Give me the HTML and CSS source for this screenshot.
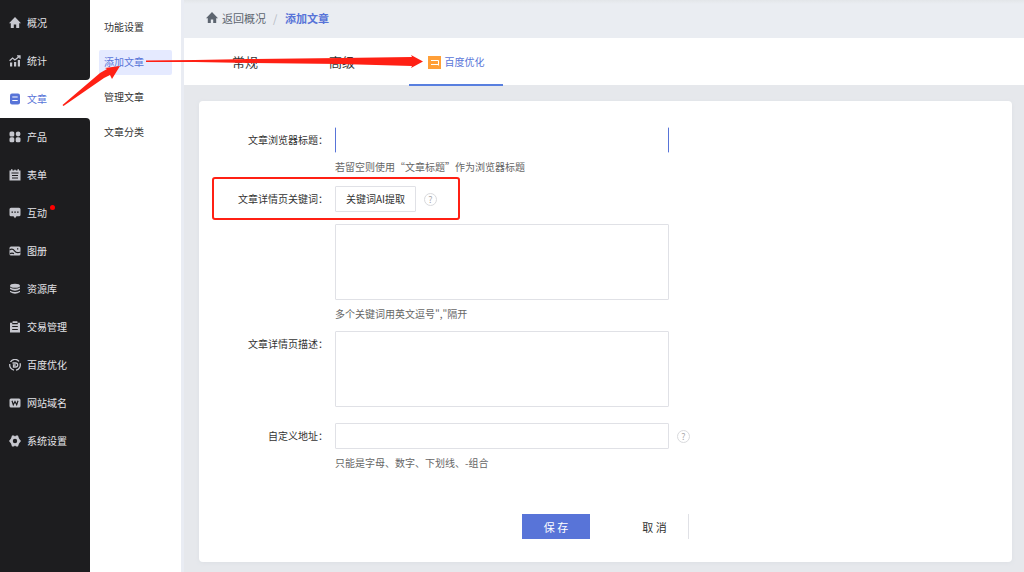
FILE: index.html
```
<!DOCTYPE html>
<html lang="zh-CN">
<head>
<meta charset="utf-8">
<title>添加文章</title>
<link rel="stylesheet" href="styles.css">
</head>
<body>
<div class="app">
  <nav class="sidebar">
    <a class="side-item" href="#"><svg class="icon" viewBox="0 0 12 12"><path d="M6 0 12 6.200H10.200V11H7.200V7.600H4.800V11H1.800V6.200H0Z"/></svg>概况</a>
    <a class="side-item above-active" href="#"><svg class="icon" viewBox="0 0 12 12"><path d="M1 7.500h2.200v4H1zM5 7h2.200v4.500H5zM8.800 5H11v6.500H8.800z"/><path class="line" d="M.6 5.800 3.600 3l2.300 2L10.600 1.200M8 .8h3v3"/></svg>统计</a>
    <a class="side-item active" href="#"><svg class="icon" viewBox="0 0 12 12"><rect x="1" y=".5" width="10" height="11" rx="2"/><path class="cut" d="M3.300 4h5.400M3.300 7.500h5.400"/></svg>文章</a>
    <a class="side-item below-active" href="#"><svg class="icon" viewBox="0 0 12 12"><rect x=".5" y=".5" width="4.800" height="5" rx="1.500"/><rect x="6.700" y=".5" width="4.800" height="5" rx="2.400"/><rect x=".5" y="6.300" width="4.800" height="5" rx="1.500"/><rect x="6.700" y="6.300" width="4.800" height="5" rx="1.500"/></svg>产品</a>
    <a class="side-item" href="#"><svg class="icon" viewBox="0 0 12 12"><path d="M.5 1.500h1.500V.3h1.500v1.200h1.500L6 .3l1 1.200h1.500V.3H10v1.200h1.500v10H.5Z"/><path class="cut" d="M2.500 4h7M3 6.500h6M3 9h6"/></svg>表单</a>
    <a class="side-item" href="#"><svg class="icon" viewBox="0 0 12 12"><path d="M2 .8h8q1.500 0 1.500 1.500v5.500q0 1.500-1.500 1.500H7.500L6 11.200 4.500 9.300H2Q.5 9.300.5 7.800V2.300Q.5.8 2 .8Z"/><path class="cut" d="M2.500 5.200H4M5.300 5.200h1.500M8.100 5.200h1.500"/></svg><span class="dotted">互动<i class="dot"></i></span></a>
    <a class="side-item" href="#"><svg class="icon" viewBox="0 0 12 12"><rect x=".5" y="1.500" width="11" height="9" rx="1.500"/><path class="cut" d="M.5 5q3-2 5 .8t6 1.200M8 3.800h1.300M1 8.600q2-1 4 0"/></svg>图册</a>
    <a class="side-item" href="#"><svg class="icon" viewBox="0 0 12 12"><ellipse cx="6" cy="2.800" rx="5" ry="2"/><path d="M1 4.600q5 2.400 10 0v1.500q-5 3.200-10 0ZM1 7.700q5 2.400 10 0v1.200q-5 3.600-10 0Z"/></svg>资源库</a>
    <a class="side-item" href="#"><svg class="icon" viewBox="0 0 12 12"><path d="M1 1.800h2.600V.3h4.800v1.500H11v9.700H1Z"/><path class="cut" d="M3.200 2.600h5.600M3.200 5.500h5.600M3.200 8.500h5.600"/></svg>交易管理</a>
    <a class="side-item" href="#"><svg class="icon" viewBox="0 0 12 12"><path class="line" d="M1.500 3A5.200 5.200 0 0 1 10 2.300M11 4.200A5.200 5.200 0 0 1 7 11.100M5 11.100A5.200 5.200 0 0 1 .8 5M3.500 4h3.200a2 2 0 0 1 0 4H4.500V6h2.300"/></svg>百度优化</a>
    <a class="side-item" href="#"><svg class="icon" viewBox="0 0 12 12"><rect x=".5" y="1.500" width="11" height="9" rx="1.500"/><path class="cut" d="m3 3.800 1.300 4L6 4.500l1.700 3.300L9 3.800"/></svg>网站域名</a>
    <a class="side-item" href="#"><svg class="icon" viewBox="0 0 12 12"><path fill-rule="evenodd" d="M3 .5h2L6 1.400 7 .5h2L10 3.600 12 6 10 8.400 9 11.500H7L6 10.600 5 11.500H3L2 8.400 0 6 2 3.600ZM6 3.800a2.200 2.200 0 1 0 0 4.400 2.200 2.200 0 0 0 0-4.400Z"/></svg>系统设置</a>
  </nav>

  <nav class="submenu">
    <a class="sub-item" href="#">功能设置</a>
    <a class="sub-item current" href="#">添加文章</a>
    <a class="sub-item" href="#">管理文章</a>
    <a class="sub-item" href="#">文章分类</a>
  </nav>

  <div class="page">
    <header class="crumbs">
      <a class="back" href="#"><svg class="icon" viewBox="0 0 12 12"><path d="M6 0 12 6.200H10.200V11H7.200V7.600H4.800V11H1.800V6.200H0Z"/></svg>返回概况</a>
      <span class="slash">/</span>
      <strong class="here">添加文章</strong>
    </header>

    <div class="tabs">
      <button class="tab" type="button">常规</button>
      <button class="tab" type="button">高级</button>
      <button class="tab selected" type="button"><svg class="badge" viewBox="0 0 13 13"><rect width="13" height="13"/><path d="M3 4.500h7.500v5M3 8.500h7"/></svg>百度优化</button>
    </div>

    <main class="main">
      <form class="card">
        <div class="row">
          <label for="title">文章浏览器标题：</label>
          <div class="field">
            <input class="box focused" id="title" type="text">
            <p class="hint">若留空则使用“文章标题”作为浏览器标题</p>
          </div>
        </div>
        <div class="row keywords">
          <label for="keywords">文章详情页关键词：</label>
          <div class="field">
            <div class="line-up">
              <button class="extract" type="button">关键词AI提取</button>
              <button class="help" type="button">?</button>
            </div>
            <textarea class="box area" id="keywords"></textarea>
            <p class="hint">多个关键词用英文逗号","隔开</p>
          </div>
        </div>
        <div class="row">
          <label for="desc">文章详情页描述：</label>
          <div class="field"><textarea class="box area" id="desc"></textarea></div>
        </div>
        <div class="row address">
          <label for="address">自定义地址：</label>
          <div class="field">
            <div class="line-up">
              <input class="box" id="address" type="text">
              <button class="help" type="button">?</button>
            </div>
            <p class="hint">只能是字母、数字、下划线、-组合</p>
          </div>
        </div>
        <div class="actions">
          <button class="action save" type="submit">保 存</button>
          <button class="action cancel" type="button">取 消</button>
        </div>
      </form>
    </main>
  </div>
</div>

<svg class="marks" width="480" height="230" viewBox="0 0 480 230" aria-hidden="true">
  <path d="M62.500 105 100 73 107 69 105 68 120 66 112 79 110 75 104 78 63.500 106Z"/>
  <path d="M146 60.500 195 60 250 59 340 58 412 57 411 55 423 61.500 411 68 412 66 340 64 250 63 195 62 146 62Z"/>
  <rect x="213" y="178" width="246" height="41" rx="2"/>
</svg>
</body>
</html>
```
FILE: styles.css
```
* {
  box-sizing: border-box;
}

body {
  margin: 0;
  font: 10px/20px "Noto Sans CJK SC", "Liberation Sans", sans-serif;
  color: #333;
  background: #e6e8ec;
}

a {
  color: inherit;
  text-decoration: none;
}

button,
input,
textarea {
  font: inherit;
  color: inherit;
}

button {
  padding: 0;
  border: 0;
  background: none;
  cursor: pointer;
}

.app {
  display: flex;
  min-height: 100vh;
}

.icon {
  width: 12px;
  height: 12px;
  flex: none;
  fill: currentColor;
}

.icon .line {
  fill: none;
  stroke: currentColor;
  stroke-width: 1.3;
}

.icon .cut {
  fill: none;
  stroke: #1d1d1f;
  stroke-width: 1.2;
}

/* Primary navigation */
.sidebar {
  display: flex;
  flex-direction: column;
  flex: none;
  width: 90px;
  background: #fff;
}

.sidebar::before,
.sidebar::after {
  content: "";
  background: #1d1d1f;
}

.sidebar::before {
  height: 4px;
}

.sidebar::after {
  flex: 1;
}

.side-item {
  display: flex;
  align-items: center;
  gap: 6px;
  height: 38px;
  padding-left: 9px;
  color: #e4e4e8;
  background: #1d1d1f;
}

.side-item .icon {
  color: #c6c7ce;
}

.side-item.above-active {
  border-bottom-right-radius: 4px;
}

.side-item.below-active {
  border-top-right-radius: 4px;
}

.side-item.active,
.side-item.active .icon {
  color: #5874d8;
  background: #fff;
}

.side-item.active .cut {
  stroke: #fff;
}

.dotted {
  position: relative;
}

.dot {
  position: absolute;
  top: 2px;
  right: -8px;
  width: 5px;
  height: 5px;
  border-radius: 50%;
  background: #f00;
}

/* Secondary navigation */
.submenu {
  display: flex;
  flex-direction: column;
  gap: 10px;
  flex: none;
  width: 94px;
  padding: 15px 9px 0 9px;
  background: #fff;
  border-right: 3px solid #e9ecf3;
}

.sub-item {
  height: 25px;
  padding-left: 5px;
  line-height: 24px;
  border-radius: 2px;
}

.sub-item.current {
  color: #5874d8;
  background: #e5eaff;
}

/* Page header */
.page {
  display: flex;
  flex-direction: column;
  flex: 1;
  min-width: 0;
}

.crumbs {
  display: flex;
  align-items: center;
  gap: 7px;
  height: 38px;
  padding: 0 0 2px 22px;
  font-size: 11px;
  color: #5d6570;
  background: linear-gradient(#e3e6e9, #eaedf2 4px);
}

.back {
  display: flex;
  align-items: center;
  gap: 4px;
}

.slash {
  color: #b4bac2;
  width: 5px;
}

.here {
  color: #5874d8;
}

.tabs {
  display: flex;
  height: 47px;
  padding-left: 14px;
  background: #fff;
}

.tab {
  width: 94px;
  height: 48px;
  margin-right: 3px;
  font-size: 13px;
}

.tab.selected {
  display: flex;
  align-items: center;
  justify-content: center;
  gap: 4px;
  margin-left: 17px;
  font-size: 10px;
  color: #5874d8;
  border-bottom: 2px solid #587fdf;
  padding-top: 2px;
}

.badge {
  width: 13px;
  height: 13px;
  fill: #ff9f38;
}

.badge path {
  fill: none;
  stroke: #fff;
}

/* Form */
.main {
  flex: 1;
  padding: 16px 12px 10px 15px;
}

.card {
  min-height: 100%;
  padding-top: 26px;
  background: #fff;
  border-radius: 4px;
  box-shadow: 0 1px 4px #dcdfe4;
}

.row {
  display: grid;
  grid-template-columns: 129px 1fr;
  gap: 7px;
}

.row label {
  text-align: right;
  line-height: 26px;
}

.keywords {
  margin-top: 5px;
}

.address {
  margin-top: 16px;
}

.box {
  display: block;
  width: 334px;
  height: 26px;
  padding: 0 8px;
  border: 1px solid #e0e1e6;
  border-radius: 1px;
  outline: 0;
  background: #fff;
}

.box.focused {
  border-color: #fff #5874d8;
}

.box.area {
  height: 76px;
  resize: none;
}

.hint {
  margin: 0;
  line-height: 28px;
  color: #666;
}

.line-up {
  display: flex;
  align-items: center;
  gap: 8px;
}

.keywords .line-up {
  margin-bottom: 12px;
}

.keywords .hint {
  margin-bottom: 3px;
}

.extract {
  width: 81px;
  height: 26px;
  border: 1px solid #e0e1e6;
  border-radius: 1px;
}

.help {
  width: 13px;
  height: 13px;
  font-size: 9px;
  line-height: 11px;
  color: #aaa;
  border: 1px solid #d9dadd;
  border-radius: 50%;
}

.actions {
  display: flex;
  justify-content: center;
  gap: 31px;
  margin-top: 37px;
}

.action {
  width: 68px;
  height: 25px;
  font-size: 11px;
}

.save {
  color: #fff;
  background: #5874d8;
}

.cancel {
  border-right: 1px solid #e0e1e6;
}

/* Callouts drawn over the page */
.marks {
  position: absolute;
  top: 0;
  left: 0;
  fill: #ff2014;
  pointer-events: none;
}

.marks rect {
  fill: none;
  stroke: #ff2014;
  stroke-width: 2;
}
```
